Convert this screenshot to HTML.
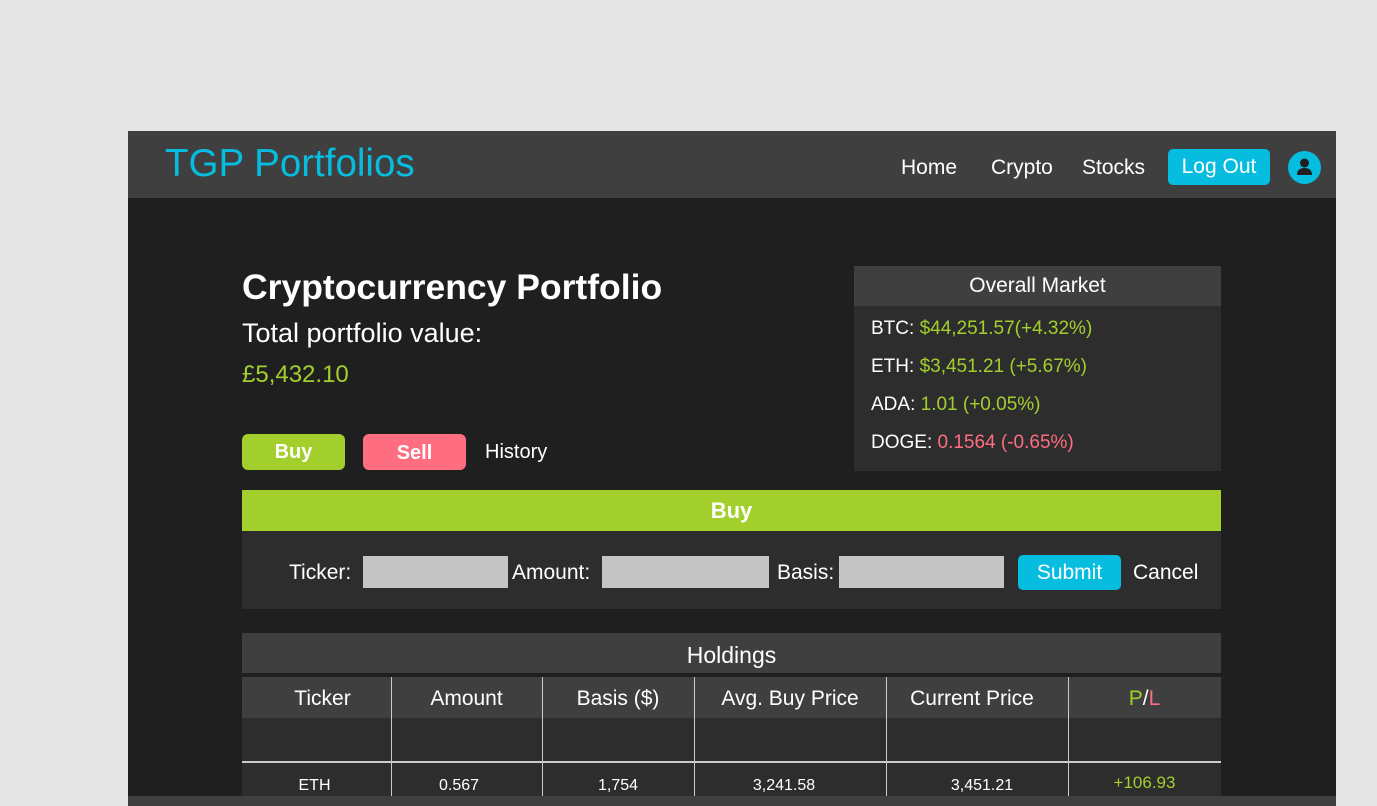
<!DOCTYPE html><html><head><style>
*{margin:0;padding:0;box-sizing:border-box}
body{width:1377px;height:806px;background:#e5e5e5;font-family:"Liberation Sans",sans-serif;position:relative;overflow:hidden;color:#fff}
.a{position:absolute}
.main{left:128px;top:131px;width:1208px;height:675px;background:#1f1f1f}
.nav{left:128px;top:131px;width:1208px;height:67px;background:#3f3f3f}
.g{color:#a3cf2d}.r{color:#ff6e80}
.col{position:absolute;top:677px;height:119px;border-left:1px solid #ccc}
</style></head><body>
<div class="a main"></div>
<div class="a nav"></div>
<div class="a" style="left:165px;top:142px;font-size:38.5px;color:#06bde0">TGP Portfolios</div>
<div class="a" style="left:901px;top:156px;font-size:21px">Home</div>
<div class="a" style="left:991px;top:156px;font-size:21px">Crypto</div>
<div class="a" style="left:1082px;top:156px;font-size:21px">Stocks</div>
<div class="a" style="left:1168px;top:149px;width:102px;height:36px;background:#06bde0;border-radius:5px;font-size:21px;text-align:center;line-height:36px">Log Out</div>
<div class="a" style="left:1288px;top:151px;width:33px;height:33px;border-radius:50%;background:#06bde0">
<svg width="33" height="33"><circle cx="16.5" cy="12" r="4.5" fill="#1f1f1f"/><path d="M9 24 Q9 17 16.5 17 Q24 17 24 24Z" fill="#1f1f1f"/></svg></div>
<div class="a" style="left:242px;top:267px;font-size:35.5px;font-weight:bold">Cryptocurrency Portfolio</div>
<div class="a" style="left:242px;top:318px;font-size:27px">Total portfolio value:</div>
<div class="a g" style="left:242px;top:361px;font-size:24px">£5,432.10</div>
<div class="a" style="left:242px;top:434px;width:103px;height:36px;background:#a3cf2d;border-radius:6px;font-size:20px;font-weight:bold;text-align:center;line-height:36px">Buy</div>
<div class="a" style="left:363px;top:434px;width:103px;height:36px;background:#ff6e80;border-radius:6px;font-size:20px;font-weight:bold;text-align:center;line-height:38px">Sell</div>
<div class="a" style="left:485px;top:441px;font-size:20px">History</div>
<div class="a" style="left:854px;top:266px;width:367px;height:205px;background:#2d2d2d"></div>
<div class="a" style="left:854px;top:266px;width:367px;height:40px;background:#3f3f3f;text-align:center;line-height:40px;font-size:21px">Overall Market</div>
<div class="a" style="left:871px;top:310px;font-size:19px;line-height:38px">BTC: <span class="g">$44,251.57(+4.32%)</span><br>ETH: <span class="g">$3,451.21 (+5.67%)</span><br>ADA: <span class="g">1.01 (+0.05%)</span><br>DOGE: <span class="r">0.1564 (-0.65%)</span></div>
<div class="a" style="left:242px;top:490px;width:979px;height:41px;background:#a3cf2d;text-align:center;line-height:41px;font-size:22px;font-weight:bold">Buy</div>
<div class="a" style="left:242px;top:531px;width:979px;height:78px;background:#2d2d2d"></div>
<div class="a" style="left:289px;top:561px;font-size:21px">Ticker:</div>
<div class="a" style="left:363px;top:556px;width:145px;height:32px;background:#c4c4c4"></div>
<div class="a" style="left:512px;top:561px;font-size:21px">Amount:</div>
<div class="a" style="left:602px;top:556px;width:167px;height:32px;background:#c4c4c4"></div>
<div class="a" style="left:777px;top:561px;font-size:21px">Basis:</div>
<div class="a" style="left:839px;top:556px;width:165px;height:32px;background:#c4c4c4"></div>
<div class="a" style="left:1018px;top:555px;width:103px;height:35px;background:#06bde0;border-radius:5px;font-size:21px;text-align:center;line-height:35px">Submit</div>
<div class="a" style="left:1133px;top:561px;font-size:21px">Cancel</div>
<div class="a" style="left:242px;top:633px;width:979px;height:40px;background:#3f3f3f;text-align:center;line-height:45px;font-size:23px">Holdings</div>
<div class="a" style="left:242px;top:677px;width:979px;height:41px;background:#3f3f3f"></div>
<div class="a" style="left:242px;top:718px;width:979px;height:78px;background:#2d2d2d"></div>
<div class="a" style="left:242px;top:761px;width:979px;height:2px;background:#ccc"></div>
<div class="col" style="left:391px"></div><div class="col" style="left:542px"></div><div class="col" style="left:694px"></div><div class="col" style="left:886px"></div><div class="col" style="left:1068px"></div>
<div class="a" style="left:242px;top:687px;width:979px;font-size:21px">
<span class="a" style="left:0;width:161px;text-align:center">Ticker</span>
<span class="a" style="left:149px;width:151px;text-align:center">Amount</span>
<span class="a" style="left:300px;width:152px;text-align:center">Basis ($)</span>
<span class="a" style="left:452px;width:192px;text-align:center">Avg. Buy Price</span>
<span class="a" style="left:644px;width:172px;text-align:center">Current Price</span>
<span class="a" style="left:826px;width:153px;text-align:center"><span class="g">P</span>/<span class="r">L</span></span></div>
<div class="a" style="left:242px;top:777px;width:979px;font-size:16px">
<span class="a" style="left:0;width:145px;text-align:center">ETH</span>
<span class="a" style="left:149px;width:136px;text-align:center">0.567</span>
<span class="a" style="left:300px;width:152px;text-align:center">1,754</span>
<span class="a" style="left:452px;width:180px;text-align:center">3,241.58</span>
<span class="a" style="left:644px;width:192px;text-align:center">3,451.21</span>
<span class="a g" style="left:826px;width:153px;text-align:center;top:-4px;font-size:17px">+106.93</span></div>
<div class="a" style="left:128px;top:796px;width:1208px;height:10px;background:#3f3f3f"></div>
</body></html>
